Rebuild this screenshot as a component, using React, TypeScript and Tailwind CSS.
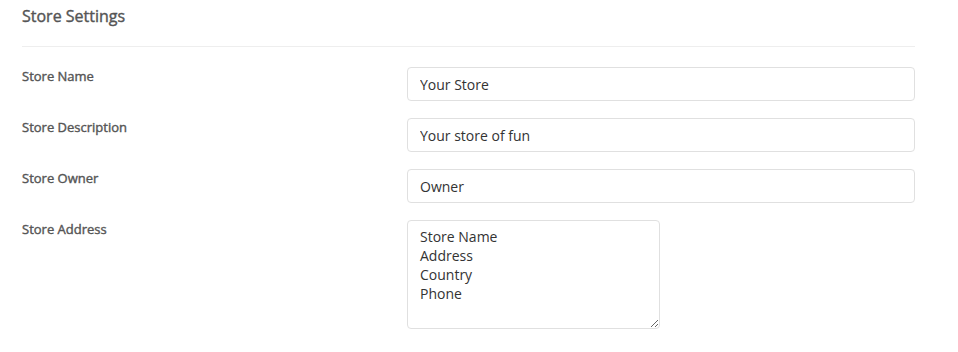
import React from 'react';

const fields = [
  { label: 'Store Name', value: 'Your Store' },
  { label: 'Store Description', value: 'Your store of fun' },
  { label: 'Store Owner', value: 'Owner' },
];

const App: React.FC = () => {
  return (
    <div className="min-h-screen bg-white font-['Open_Sans',sans-serif] text-[#555]">
      <div className="w-[893px] ml-[22px]">
        {/* Heading */}
        <div className="h-[31px] flex items-center">
          <h2 className="text-[16px] font-normal text-[#555] leading-none [-webkit-text-stroke:0.4px_#555]">Store Settings</h2>
        </div>
        <div className="mt-[15px] border-t border-[#eee]" />

        {/* Form rows */}
        <div className="mt-[20px] flex flex-col gap-[17px]">
          {fields.map((f) => (
            <div key={f.label} className="flex">
              <label className="w-[385px] text-[13px] leading-[18px] text-[#555] [-webkit-text-stroke:0.4px_#555]">{f.label}</label>
              <input
                defaultValue={f.value}
                className="flex-1 h-[34px] rounded-[4px] border border-[#e0e0e0] px-[12px] text-[14px] text-[#333] outline-none"
              />
            </div>
          ))}
          <div className="flex">
            <label className="w-[385px] text-[13px] leading-[18px] text-[#555] [-webkit-text-stroke:0.4px_#555]">Store Address</label>
            <textarea
              defaultValue={'Store Name\nAddress\nCountry\nPhone'}
              className="w-[253px] h-[109px] rounded-[4px] border border-[#e0e0e0] px-[12px] pt-[6px] pb-[8px] text-[14px] leading-[19px] text-[#333] outline-none"
            />
          </div>
        </div>
      </div>
    </div>
  );
};

export default App;
